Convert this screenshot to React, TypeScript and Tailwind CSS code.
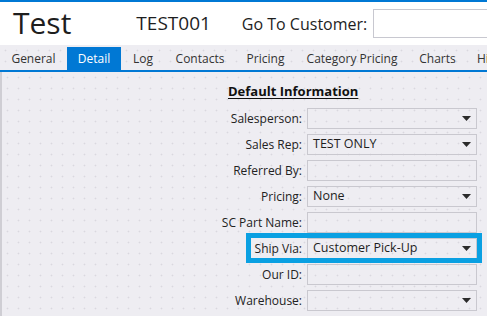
const dots =
  "bg-[#eeedf2] bg-[radial-gradient(circle,#d9d8df_0.8px,transparent_1.1px)] bg-[length:11px_11px]";

const tabs = [
  { name: "General", w: "w-[67px]" },
  { name: "Detail", w: "w-[54px]" },
  { name: "Log", w: "w-[44px]" },
  { name: "Contacts", w: "w-[70px]" },
  { name: "Pricing", w: "w-[61px]" },
  { name: "Category Pricing", w: "w-[112px]" },
  { name: "Charts", w: "w-[59px]" },
  { name: "History", w: "w-[60px]" },
];

interface Field {
  label: string;
  value?: string;
  dropdown?: boolean;
  highlight?: boolean;
}

const fields: Field[] = [
  { label: "Salesperson:", dropdown: true },
  { label: "Sales Rep:", value: "TEST ONLY", dropdown: true },
  { label: "Referred By:" },
  { label: "Pricing:", value: "None", dropdown: true },
  { label: "SC Part Name:" },
  { label: "Ship Via:", value: "Customer Pick-Up", dropdown: true, highlight: true },
  { label: "Our ID:" },
  { label: "Warehouse:", dropdown: true },
];

function Arrow() {
  return (
    <svg width="9" height="5" viewBox="0 0 9 5" className="shrink-0">
      <path d="M0 0h9L4.5 5z" fill="#2b2b2b" />
    </svg>
  );
}

function FieldRow({ field }: { field: Field }) {
  return (
    <div className="relative flex items-center h-[21px]">
      {/* highlight annotation around Ship Via */}
      {field.highlight && (
        <div className="absolute left-[39px] top-[-5px] w-[236px] h-[30px] border-[5px] border-[#0aa0e2]" />
      )}
      <div className="w-[95px] text-right text-[12px] text-[#222]">{field.label}</div>
      <div className="ml-[5px] w-[170px] h-[21px] border border-[#c9c8cf] flex items-center pl-[5px] pr-[5px]">
        <span className="flex-1 text-[12.5px] text-[#1e1e1e] leading-none">{field.value}</span>
        {field.dropdown && <Arrow />}
      </div>
    </div>
  );
}

export default function App() {
  return (
    <div
      className="w-[487px] h-[316px] overflow-hidden border-t-2 border-[#0078d4] flex flex-col"
      style={{ fontFamily: '"Open Sans", "Noto Sans", sans-serif' }}
    >
      {/* Header */}
      <div className="h-[43px] bg-white flex items-center shrink-0 whitespace-nowrap">
        <div className="ml-[13px] text-[30px] text-[#1e1e1e] leading-none -mt-[2px] shrink-0">Test</div>
        <div className="ml-[65px] text-[19px] text-[#1e1e1e] leading-none shrink-0">TEST001</div>
        <div className="ml-[31px] text-[16px] text-[#1e1e1e] leading-none shrink-0">Go To Customer:</div>
        <div className="ml-[6px] w-[140px] h-[29px] border border-[#c8c8d0] bg-white shrink-0" />
      </div>

      {/* Tabs */}
      <div className={`${dots} h-[27px] flex items-end border-b-2 border-[#0078d4] shrink-0`}>
        {tabs.map((t) => (
          <div
            key={t.name}
            className={`${t.w} shrink-0 h-[23px] flex items-center justify-center text-[12px] whitespace-nowrap ${
              t.name === "Detail" ? "bg-[#0078d4] text-white" : "text-[#333]"
            }`}
          >
            {t.name}
          </div>
        ))}
      </div>

      {/* Content */}
      <div className={`${dots} flex-1 border-l-2 border-[#cfced4]`}>
        <div className="ml-[205px] pt-[11px]">
          <div className="ml-[21px] text-[13px] font-bold text-[#111] underline underline-offset-2 leading-[16px]">
            Default Information
          </div>
          <div className="mt-[9px] flex flex-col gap-[5px]">
            {fields.map((f) => (
              <FieldRow key={f.label} field={f} />
            ))}
          </div>
        </div>
      </div>
    </div>
  );
}
